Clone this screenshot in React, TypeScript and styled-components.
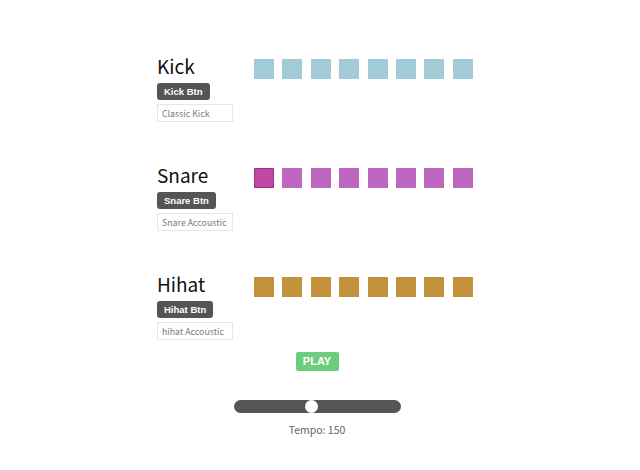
import React, { FC, useState } from 'react';
import styled, { createGlobalStyle } from 'styled-components';

const GlobalStyle = createGlobalStyle`
  body {
    margin: 0;
    background: #ffffff;
    font-family: 'Noto Sans CJK JP', 'Noto Sans', sans-serif;
    color: #111;
  }
`;

interface Track {
  name: string;
  btn: string;
  sample: string;
  color: string;
  activeColor: string;
  active: number[];
}

const TRACKS: Track[] = [
  { name: 'Kick', btn: 'Kick Btn', sample: 'Classic Kick', color: '#a8d1de', activeColor: '#7fb8cb', active: [] },
  { name: 'Snare', btn: 'Snare Btn', sample: 'Snare Accoustic', color: '#c36ac7', activeColor: '#c94aa9', active: [0] },
  { name: 'Hihat', btn: 'Hihat Btn', sample: 'hihat Accoustic', color: '#c8963f', activeColor: '#a8782c', active: [] },
];

const Wrapper = styled.div`
  width: 320px;
  margin-left: 157px;
  padding-top: 54px;
`;

const Section = styled.section`
  display: flex;
  height: 68px;
  margin-bottom: 41px;

  &:last-of-type {
    margin-bottom: 0;
  }
`;

const Info = styled.div`
  width: 97px;
  display: flex;
  flex-direction: column;
  align-items: flex-start;
`;

const Title = styled.h2`
  margin: 0;
  height: 29px;
  font-size: 19px;
  line-height: 24px;
  font-weight: 400;
  color: #111;
`;

const TrackButton = styled.button`
  height: 17px;
  padding: 0 7px;
  border: none;
  border-radius: 3px;
  background: #555555;
  color: #fff;
  font-family: 'Liberation Sans', Arial, sans-serif;
  font-size: 9.5px;
  font-weight: 700;
  line-height: 17px;
`;

const SampleInput = styled.input`
  box-sizing: border-box;
  width: 76px;
  height: 18px;
  margin-top: 4px;
  padding: 0 4px;
  border: 1px solid #e6e6e6;
  font-family: inherit;
  font-size: 8.8px;
  color: #555;
  outline: none;

  &::placeholder {
    color: #7a7a7a;
  }
`;

const Steps = styled.div`
  display: flex;
  gap: 8.4px;
  margin-top: 5px;
  height: 20px;
`;

const Step = styled.div<{ $color: string; $on: boolean; $border: string }>`
  box-sizing: border-box;
  width: 20px;
  height: 20px;
  background: ${({ $color }) => $color};
  border: 1px solid ${({ $on, $border, $color }) => ($on ? $border : $color)};
  filter: brightness(0.97);
`;

const Controls = styled.div`
  display: flex;
  flex-direction: column;
  align-items: center;
  padding-top: 12px;
`;

const PlayButton = styled.button`
  width: 43px;
  height: 19px;
  border: none;
  border-radius: 2px;
  background: #6ccd7c;
  color: #fff;
  font-family: 'Liberation Sans', Arial, sans-serif;
  font-size: 11px;
  font-weight: 700;
  line-height: 19px;
  padding: 0;
`;

const TempoSlider = styled.input`
  -webkit-appearance: none;
  appearance: none;
  width: 167px;
  height: 13px;
  margin: 29px 0 0;
  border-radius: 7px;
  background: #555555;
  outline: none;

  &::-webkit-slider-thumb {
    -webkit-appearance: none;
    appearance: none;
    width: 13px;
    height: 13px;
    border-radius: 50%;
    background: #fff;
    border: none;
  }
`;

const TempoLabel = styled.div`
  margin-top: 9px;
  font-size: 10.5px;
  color: #666;
`;

const App: FC = () => {
  const [tempo, setTempo] = useState(150);
  return (
    <>
      <GlobalStyle />
      <Wrapper>
        {TRACKS.map((t) => (
          <Section key={t.name}>
            <Info>
              <Title>{t.name}</Title>
              <TrackButton>{t.btn}</TrackButton>
              <SampleInput placeholder={t.sample} />
            </Info>
            <Steps>
              {Array.from({ length: 8 }).map((_, i) => {
                const on = t.active.includes(i);
                return <Step key={i} $on={on} $color={on ? t.activeColor : t.color} $border="#9a3a86" />;
              })}
            </Steps>
          </Section>
        ))}
        <Controls>
          <PlayButton>PLAY</PlayButton>
          <TempoSlider
            type="range"
            min={20}
            max={300}
            value={tempo}
            onChange={(e) => setTempo(Number(e.target.value))}
          />
          <TempoLabel>Tempo: {tempo}</TempoLabel>
        </Controls>
      </Wrapper>
    </>
  );
};

export default App;
